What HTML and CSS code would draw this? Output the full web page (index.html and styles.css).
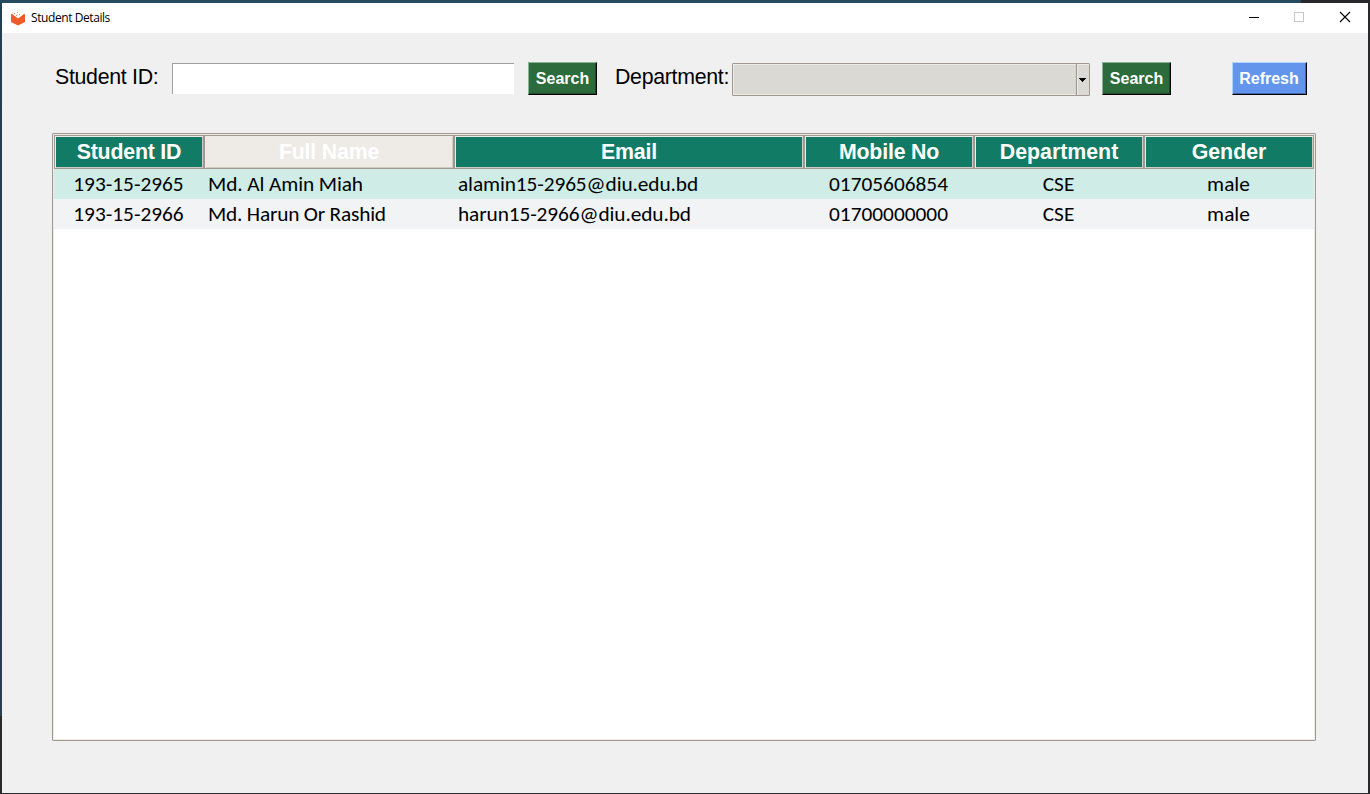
FILE: index.html
```html
<!DOCTYPE html>
<html lang="en">
<head>
<meta charset="utf-8">
<title>Student Details</title>
<link rel="stylesheet" href="styles.css">
</head>
<body>
<div class="desktop">
<main class="window">
  <header class="titlebar">
    <svg class="logo" width="16" height="16" viewBox="0 0 16 16"><path fill="#f15a29" d="M1 4.500 2 4l6 4.500L14 4l1 .5V12l-7 3.500L1 12z"/><path fill="#f58a66" d="M4 3h1v1H4zM7 2h1v1H7zM6 5h1v1H6zM9 4h1v1H9z"/></svg>
    <span class="title">Student Details</span>
    <svg class="controls" width="104" height="12" viewBox="0 0 104 12" fill="none" shape-rendering="crispEdges"><path d="M1 6.500h10" stroke="#000"/><path d="M46.500 1.500h9v9h-9z" stroke="#c8c8c8"/><path d="m92 1 10 10m0-10L92 11" stroke="#000" stroke-width="1.100" shape-rendering="auto"/></svg>
  </header>
  <form class="toolbar">
    <label class="label id-label">Student ID:</label>
    <div class="entry"></div>
    <button type="button" class="button first">Search</button>
    <label class="label dept-label">Department:</label>
    <div class="combo"><div class="field"></div><div class="arrow"><svg width="7" height="4" viewBox="0 0 7 4" shape-rendering="crispEdges"><path d="M0 0h7v1H6v1H5v1H4v1H3V3H2V2H1V1H0z"/></svg></div></div>
    <button type="button" class="button second">Search</button>
    <button type="button" class="button refresh">Refresh</button>
  </form>
  <section class="table">
    <div class="row head">
      <div class="th">Student ID</div><div class="th hover">Full Name</div><div class="th">Email</div><div class="th">Mobile No</div><div class="th wide">Department</div><div class="th wide">Gender</div>
    </div>
    <div class="row mint">
      <div class="td mid">193-15-2965</div><div class="td">Md. Al Amin Miah</div><div class="td">alamin15-2965@diu.edu.bd</div><div class="td mid">01705606854</div><div class="td mid">CSE</div><div class="td mid">male</div>
    </div>
    <div class="row pale">
      <div class="td mid">193-15-2966</div><div class="td tight">Md. Harun Or Rashid</div><div class="td">harun15-2966@diu.edu.bd</div><div class="td mid">01700000000</div><div class="td mid">CSE</div><div class="td mid">male</div>
    </div>
  </section>
</main>
</div>
</body>
</html>
```

FILE: styles.css
```css
* { box-sizing: border-box; }
body { margin: 0; font-family: "Liberation Sans", Arial, sans-serif; color: #000; }
.desktop {
  width: 1370px; height: 794px; padding: 3px 2px 1px; overflow: hidden;
  background:
    linear-gradient(#264b5e, #264b5e) 0 0 / 1301px 3px no-repeat,
    linear-gradient(#203f50, #2c3d50) 0 0 / 2px 716px no-repeat,
    #29292b;
}
.window { height: 790px; background: #f0f0f0; }
.titlebar { height: 30px; background: #fff; display: flex; align-items: center; padding: 0 16px 0 8px; }
.title { margin-left: 5px; font: 12px/16px "Open Sans", "Noto Sans", sans-serif; letter-spacing: -0.42px; }
.controls { margin: 0 0 2px auto; }
.toolbar { display: flex; height: 34px; margin: 29px 0 0 50px; }
.label { font-size: 21.330px; line-height: 30px; white-space: nowrap; letter-spacing: -0.3px; }
.id-label { width: 120px; padding-left: 3px; }
.entry { width: 342px; height: 31px; margin-top: 1px; background: #fff; border: solid #a0a0a0; border-width: 1px 0 0 1px; }
.button {
  width: 69px; height: 33px; padding: 1px 0 0; border: 1px solid; border-color: #86b495 #000 #000 #86b495;
  background: #2c6b3b; color: #fff; font: bold 16px/30px "Liberation Sans", Arial, sans-serif;
  box-shadow: inset -1px -1px #1f4a2a;
}
.first { margin-left: 14px; }
.dept-label { width: 135px; padding-left: 18px; }
.combo { width: 358px; height: 33px; margin-top: 1px; display: flex; border: 1px solid #9e9a91; border-radius: 1px; background: #dad9d3; }
.field { flex: 1; border: 1px solid #eeebe7; border-right-color: #d5d2ca; }
.arrow { width: 13px; border-left: 1px solid #9e9a91; box-shadow: inset 1px 1px #eeebe7; padding: 14px 0 0 2px; font-size: 0; }
.second { margin-left: 12px; }
.refresh { width: 75px; margin-left: 61px; padding-right: 1px; background: #6495ed; border-color: #b2d2ff #000 #000 #b2d2ff; box-shadow: inset -1px -1px #4568a6; }
.table { width: 1264px; height: 608px; margin: 37px 0 0 50px; border: 1px solid #9e9a91; border-radius: 1px; background: #fff; padding: 1px; box-shadow: inset 0 0 0 1px #eeebe7; }
.row { display: grid; grid-template-columns: 150px 250px 350px 170px 170px 170px; height: 30px; }
.head { height: 34px; }
.th { border: 1px solid #9e9a91; background: #127b65; color: #fff; font: bold 21.330px/32px "Liberation Sans", Arial, sans-serif; letter-spacing: -0.2px; text-align: center; box-shadow: inset 1px 1px #eeebe7, inset -1px -1px #cfcac2; }
.wide { letter-spacing: 0; }
.hover { background: #eeebe7; }
.mint { background: #d0ece6; }
.pale { background: #f1f3f5; }
.td { font: 21.330px/30px Carlito, Lato, sans-serif; letter-spacing: -0.1px; white-space: nowrap; padding-left: 4px; }
.tight { letter-spacing: -0.2px; }
.mid { text-align: center; padding: 0 1px 0 0; letter-spacing: 0; }
```
